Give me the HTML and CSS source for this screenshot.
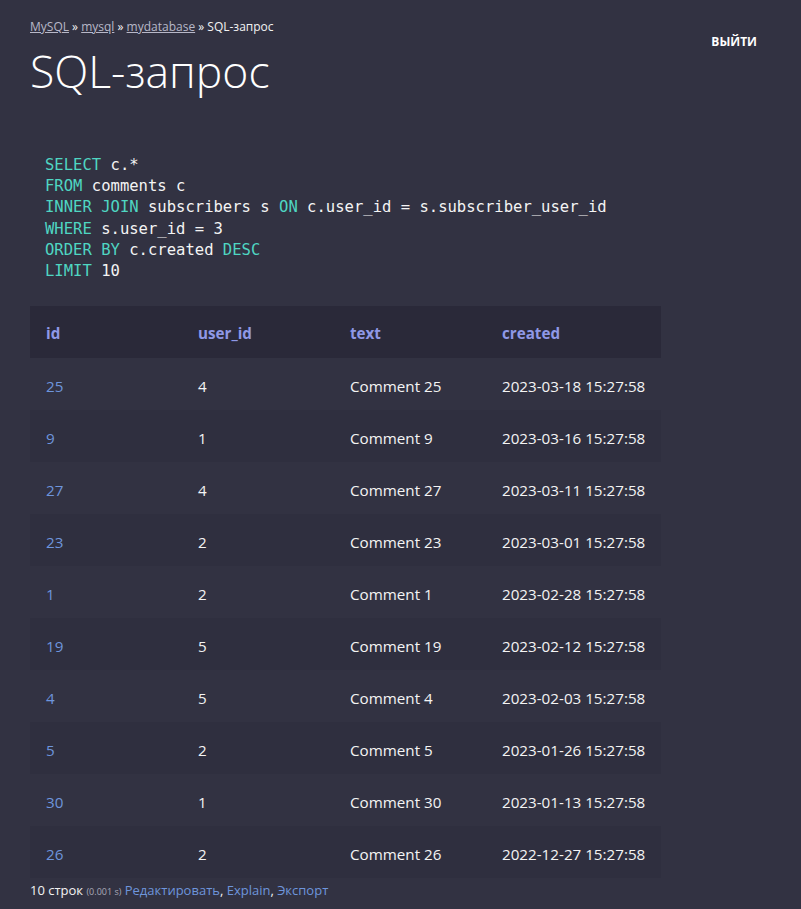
FILE: index.html
```html
<!DOCTYPE html>
<html lang="ru">
<head>
<meta charset="utf-8">
<title>SQL-запрос</title>
<link rel="stylesheet" href="styles.css">
</head>
<body>
<div class="page">
  <header class="top">
    <div class="head-left">
      <p class="crumbs"><a href="#">MySQL</a> » <a href="#">mysql</a> » <a href="#">mydatabase</a> » SQL-запрос</p>
      <h1 class="title">SQL-запрос</h1>
    </div>
    <a class="logout" href="#">выйти</a>
  </header>

  <pre class="sql"><span class="kw">SELECT</span> c.*
<span class="kw">FROM</span> comments c
<span class="kw">INNER JOIN</span> subscribers s <span class="kw">ON</span> c.user_id = s.subscriber_user_id
<span class="kw">WHERE</span> s.user_id = 3
<span class="kw">ORDER BY</span> c.created <span class="kw">DESC</span>
<span class="kw">LIMIT</span> 10</pre>

  <table class="result">
    <thead>
      <tr><th class="c1">id</th><th class="c2">user_id</th><th class="c3">text</th><th>created</th></tr>
    </thead>
    <tbody>
      <tr><td><a href="#">25</a></td><td>4</td><td>Comment 25</td><td>2023-03-18 15:27:58</td></tr>
      <tr><td><a href="#">9</a></td><td>1</td><td>Comment 9</td><td>2023-03-16 15:27:58</td></tr>
      <tr><td><a href="#">27</a></td><td>4</td><td>Comment 27</td><td>2023-03-11 15:27:58</td></tr>
      <tr><td><a href="#">23</a></td><td>2</td><td>Comment 23</td><td>2023-03-01 15:27:58</td></tr>
      <tr><td><a href="#">1</a></td><td>2</td><td>Comment 1</td><td>2023-02-28 15:27:58</td></tr>
      <tr><td><a href="#">19</a></td><td>5</td><td>Comment 19</td><td>2023-02-12 15:27:58</td></tr>
      <tr><td><a href="#">4</a></td><td>5</td><td>Comment 4</td><td>2023-02-03 15:27:58</td></tr>
      <tr><td><a href="#">5</a></td><td>2</td><td>Comment 5</td><td>2023-01-26 15:27:58</td></tr>
      <tr><td><a href="#">30</a></td><td>1</td><td>Comment 30</td><td>2023-01-13 15:27:58</td></tr>
      <tr><td><a href="#">26</a></td><td>2</td><td>Comment 26</td><td>2022-12-27 15:27:58</td></tr>
    </tbody>
  </table>

  <p class="summary">10 строк <span class="time">(0.001 s)</span> <a href="#">Редактировать</a>, <a href="#">Explain</a>, <a href="#">Экспорт</a></p>
</div>
</body>
</html>
```

FILE: styles.css
```css
html, body {
  margin: 0;
  padding: 0;
  background: #323242;
  color: #f2f2f2;
  font-family: "Open Sans", "Noto Sans", sans-serif;
}

.page {
  padding: 17px 0 0 30px;
}

.top {
  display: flex;
  justify-content: space-between;
  align-items: flex-start;
  width: 727px;
}

.crumbs {
  margin: 0;
  font-size: 12px;
  line-height: 20px;
  color: #f2f2f2;
}

.crumbs a {
  color: #b8b8c8;
  text-decoration: underline;
}

.title {
  margin: 6px 0 0;
  font-weight: 300;
  font-size: 44.5px;
  line-height: 56px;
  color: #ffffff;
}

.logout {
  margin-top: 16px;
  color: #ffffff;
  font-weight: 700;
  font-size: 12px;
  text-transform: uppercase;
  text-decoration: none;
}

.sql {
  margin: 56px 0 0 15px;
  font-family: "DejaVu Sans Mono", "Liberation Mono", monospace;
  font-size: 15.55px;
  line-height: 21.2px;
  color: #f4f4f4;
}

.kw {
  color: #4fd6c2;
}

.result {
  margin-top: 24px;
  border-collapse: collapse;
  font-size: 15.2px;
}

.result th,
.result td {
  box-sizing: border-box;
  height: 52px;
}

.result th {
  background: #2a2939;
  color: #8f98e6;
  font-weight: 700;
  text-align: left;
  padding: 2px 16px 0;
}

.result th.c1, .result th.c2, .result th.c3 {
  width: 152px;
}

.result td {
  padding: 3px 16px 0;
  color: #f4f4f4;
  white-space: nowrap;
}

.result tbody tr:nth-child(even) td {
  background: #2f2f3f;
}

.result td a {
  color: #6e95dc;
  text-decoration: none;
}

.summary {
  margin: 3px 0 0;
  font-size: 13px;
  line-height: 18px;
  color: #f2f2f2;
}

.summary .time {
  font-size: 9px;
  color: #a9a9b8;
}

.summary a {
  color: #6e95dc;
  text-decoration: none;
}
```
